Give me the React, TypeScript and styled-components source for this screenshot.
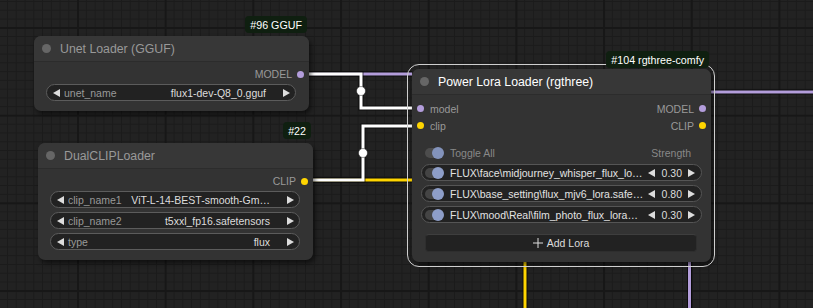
import React from 'react';
import styled, { createGlobalStyle } from 'styled-components';

const GlobalStyle = createGlobalStyle`
  html, body {
    margin: 0;
    padding: 0;
    background: #222;
    overflow: hidden;
  }
  body {
    font-family: 'Liberation Sans', Arial, sans-serif;
  }
`;

const Canvas = styled.div`
  position: relative;
  width: 813px;
  height: 308px;
  overflow: hidden;
  background-color: #222;
  background-image:
    linear-gradient(#171717 2px, transparent 2px),
    linear-gradient(90deg, #171717 2px, transparent 2px),
    linear-gradient(#1b1b1b 1px, transparent 1px),
    linear-gradient(90deg, #1b1b1b 1px, transparent 1px);
  background-size: 87.7px 87.7px, 87.7px 87.7px, 8.77px 8.77px, 8.77px 8.77px;
  background-position: 0 27px, 77px 0, 0 1px, 7px 0;
`;

const Wires = styled.svg`
  position: absolute;
  left: 0;
  top: 0;
`;

const Node = styled.div<{ $x: number; $y: number; $w: number }>`
  position: absolute;
  left: ${({ $x }) => $x}px;
  top: ${({ $y }) => $y}px;
  width: ${({ $w }) => $w}px;
  background: #333;
  border-radius: 7px;
  box-shadow: 2px 3px 5px rgba(0, 0, 0, 0.55);
`;

const Selection = styled.div`
  position: absolute;
  inset: -5px -4px -5px -5px;
  border: 1px solid #cfcfcf;
  border-radius: 12px;
  pointer-events: none;
`;

const Badge = styled.span<{ $gap: number }>`
  position: absolute;
  right: 2px;
  bottom: calc(100% + ${({ $gap }) => $gap}px);
  height: 17px;
  padding: 0 5px;
  display: flex;
  align-items: center;
  background: #0f1f10;
  border-radius: 4px;
  color: #fff;
  font-size: 10.7px;
  white-space: nowrap;
  z-index: 2;
`;

const Title = styled.div<{ $active?: boolean }>`
  display: flex;
  align-items: center;
  gap: 9px;
  height: 26px;
  box-sizing: border-box;
  padding-left: 8px;
  background: #373737;
  border-radius: 7px 7px 0 0;
  border-bottom: 1px solid #2c2c2c;
  color: ${({ $active }) => ($active ? '#fff' : '#999')};
  font-size: 12.3px;
  white-space: nowrap;
`;

const TitleDot = styled.span`
  width: 9px;
  height: 9px;
  border-radius: 50%;
  background: #666;
  flex: none;
`;

const Body = styled.div<{ $top: number }>`
  display: flex;
  flex-direction: column;
  padding: ${({ $top }) => $top}px 0 10px;
`;

const SlotRow = styled.div<{ $h: number }>`
  display: flex;
  align-items: center;
  justify-content: space-between;
  height: ${({ $h }) => $h}px;
  font-size: 10.5px;
  color: #999;
`;

const Slot = styled.span<{ $out?: boolean }>`
  display: flex;
  align-items: center;
  flex-direction: ${({ $out }) => ($out ? 'row-reverse' : 'row')};
  gap: ${({ $out }) => ($out ? 5 : 6)}px;
  padding: ${({ $out }) => ($out ? '0 5px 0 0' : '0 0 0 5px')};
  margin-left: ${({ $out }) => ($out ? 'auto' : '0')};
`;

const SlotDot = styled.span<{ $color: string }>`
  width: 7px;
  height: 7px;
  border-radius: 50%;
  background: ${({ $color }) => $color};
  flex: none;
`;

const WidgetList = styled.div`
  display: flex;
  flex-direction: column;
  gap: 4px;
  margin: 1px 13px 0 12px;
`;

const Combo = styled.div`
  display: flex;
  align-items: center;
  height: 17px;
  box-sizing: border-box;
  padding: 0 5px 0 6px;
  border: 1px solid #5c5c5c;
  border-radius: 9px;
  background: #222;
  font-size: 10.5px;
  white-space: nowrap;
`;

const ComboLabel = styled.span`
  flex: 1;
  margin-left: 4px;
  color: #999;
`;

const ComboValue = styled.span`
  color: #ddd;
  margin-right: 17px;
`;

const ArrowSvg = styled.svg`
  flex: none;
  display: block;
`;

const Arrow = ({ dir }: { dir: 'l' | 'r' }) => (
  <ArrowSvg width="7" height="8" viewBox="0 0 7 8">
    <polygon points={dir === 'l' ? '7,0 7,8 0,4' : '0,0 0,8 7,4'} fill="#ddd" />
  </ArrowSvg>
);

const LoraBlock = styled.div`
  display: flex;
  flex-direction: column;
  margin: 10px 9px 0;
`;

const LoraHeader = styled.div`
  display: flex;
  align-items: center;
  height: 17px;
  padding: 0 11px 0 4px;
  margin-bottom: 3px;
  font-size: 10.5px;
  color: #888;
`;

const HeaderLabel = styled.span`
  flex: 1;
  margin-left: 6px;
`;

const LoraList = styled.div`
  display: flex;
  flex-direction: column;
  gap: 4px;
`;

const LoraRow = styled.div`
  display: flex;
  align-items: center;
  height: 17px;
  box-sizing: border-box;
  padding: 0 6px 0 3px;
  border: 1px solid #555;
  border-radius: 9px;
  background: #222;
  font-size: 10.5px;
  color: #e2e2e2;
  white-space: nowrap;
`;

const LoraName = styled.span`
  flex: 1;
  margin-left: 6px;
  overflow: hidden;
`;

const Strength = styled.span`
  margin: 0 6px 0 7px;
  color: #ddd;
`;

const Toggle = styled.span<{ $dim?: boolean }>`
  position: relative;
  width: 19px;
  height: 12px;
  flex: none;
  &::before {
    content: '';
    position: absolute;
    left: 0;
    top: 1px;
    width: 16px;
    height: 10px;
    border-radius: 5px;
    background: ${({ $dim }) => ($dim ? '#4d4d4d' : '#444')};
  }
  &::after {
    content: '';
    position: absolute;
    right: 0;
    top: 0;
    width: 12px;
    height: 12px;
    border-radius: 50%;
    background: ${({ $dim }) => ($dim ? '#8393bb' : '#8e9ec8')};
  }
`;

const AddButton = styled.div`
  display: flex;
  align-items: center;
  justify-content: center;
  gap: 4px;
  height: 18px;
  box-sizing: border-box;
  margin: 11px 14px 0 13px;
  border: 1px solid #2e2e2e;
  border-top-color: #3e3e3e;
  border-radius: 4px;
  background: #222;
  color: #ddd;
  font-size: 10.5px;
`;

const PlusIcon = () => (
  <svg width="10" height="10" viewBox="0 0 10 10">
    <path d="M5 0V10M0 5H10" stroke="#ddd" strokeWidth="1" />
  </svg>
);

const PURPLE = '#b39ddb';
const YELLOW = '#ffd500';

const wirePaths = [
  { d: 'M301 74H412', c: PURPLE },
  { d: 'M711 92H813', c: PURPLE },
  { d: 'M689.5 258V308', c: PURPLE },
  { d: 'M305 180H412', c: YELLOW },
  { d: 'M525 258V308', c: YELLOW },
  { d: 'M301 74H361V108H416', c: '#fff' },
  { d: 'M305 180H363V126H416', c: '#fff' },
];

const Links = () => (
  <Wires width="813" height="308">
    {wirePaths.map((w, i) => (
      <g key={i} fill="none" strokeLinejoin="miter">
        <path d={w.d} stroke="rgba(0,0,0,0.6)" strokeWidth="5" />
        <path d={w.d} stroke={w.c} strokeWidth="3" />
      </g>
    ))}
    <circle cx="361" cy="91" r="4.5" fill="#fff" stroke="rgba(0,0,0,0.4)" />
    <circle cx="363" cy="153" r="4.5" fill="#fff" stroke="rgba(0,0,0,0.4)" />
  </Wires>
);

const loras = [
  { name: 'FLUX\\face\\midjourney_whisper_flux_lo…', value: '0.30' },
  { name: 'FLUX\\base_setting\\flux_mjv6_lora.safe…', value: '0.80' },
  { name: 'FLUX\\mood\\Real\\film_photo_flux_lora…', value: '0.30' },
];

const clipWidgets = [
  { label: 'clip_name1', value: 'ViT-L-14-BEST-smooth-Gm…' },
  { label: 'clip_name2', value: 't5xxl_fp16.safetensors' },
  { label: 'type', value: 'flux' },
];

const App = () => {
  return (
    <Canvas>
      <GlobalStyle />
      <Links />

      <Node $x={34} $y={36} $w={275}>
        <Badge $gap={3}>#96 GGUF</Badge>
        <Title>
          <TitleDot />
          Unet Loader (GGUF)
        </Title>
        <Body $top={3}>
          <SlotRow $h={18}>
            <Slot $out>
              <SlotDot $color={PURPLE} />
              MODEL
            </Slot>
          </SlotRow>
          <WidgetList>
            <Combo>
              <Arrow dir="l" />
              <ComboLabel>unet_name</ComboLabel>
              <ComboValue>flux1-dev-Q8_0.gguf</ComboValue>
              <Arrow dir="r" />
            </Combo>
          </WidgetList>
        </Body>
      </Node>

      <Node $x={38} $y={143} $w={275}>
        <Badge $gap={4}>#22</Badge>
        <Title>
          <TitleDot />
          DualCLIPLoader
        </Title>
        <Body $top={3}>
          <SlotRow $h={18}>
            <Slot $out>
              <SlotDot $color={YELLOW} />
              CLIP
            </Slot>
          </SlotRow>
          <WidgetList>
            {clipWidgets.map((w) => (
              <Combo key={w.label}>
                <Arrow dir="l" />
                <ComboLabel>{w.label}</ComboLabel>
                <ComboValue>{w.value}</ComboValue>
                <Arrow dir="r" />
              </Combo>
            ))}
          </WidgetList>
        </Body>
      </Node>

      <Node $x={412} $y={69} $w={299}>
        <Selection />
        <Badge $gap={1}>#104 rgthree-comfy</Badge>
        <Title $active>
          <TitleDot />
          Power Lora Loader (rgthree)
        </Title>
        <Body $top={5}>
          <SlotRow $h={17}>
            <Slot>
              <SlotDot $color={PURPLE} />
              model
            </Slot>
            <Slot $out>
              <SlotDot $color={PURPLE} />
              MODEL
            </Slot>
          </SlotRow>
          <SlotRow $h={17}>
            <Slot>
              <SlotDot $color={YELLOW} />
              clip
            </Slot>
            <Slot $out>
              <SlotDot $color={YELLOW} />
              CLIP
            </Slot>
          </SlotRow>
          <LoraBlock>
            <LoraHeader>
              <Toggle $dim />
              <HeaderLabel>Toggle All</HeaderLabel>
              Strength
            </LoraHeader>
            <LoraList>
              {loras.map((l) => (
                <LoraRow key={l.name}>
                  <Toggle />
                  <LoraName>{l.name}</LoraName>
                  <Arrow dir="l" />
                  <Strength>{l.value}</Strength>
                  <Arrow dir="r" />
                </LoraRow>
              ))}
            </LoraList>
          </LoraBlock>
          <AddButton>
            <PlusIcon />
            Add Lora
          </AddButton>
        </Body>
      </Node>
    </Canvas>
  );
};

export default App;
